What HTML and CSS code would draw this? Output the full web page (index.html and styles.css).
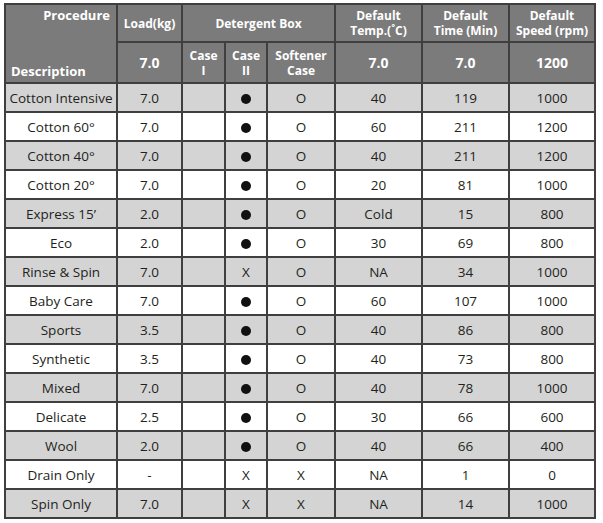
FILE: index.html
```html
<!DOCTYPE html>
<html>
<head>
<meta charset="utf-8">
<link rel="stylesheet" href="styles.css">
</head>
<body>
<table class="prog">
  <colgroup>
    <col class="c-desc"><col class="c-load"><col class="c-case1"><col class="c-case2"><col class="c-soft"><col class="c-temp"><col class="c-time"><col class="c-speed">
  </colgroup>
  <thead>
    <tr class="h1">
      <th rowspan="2" class="corner">
        <div class="corner-in">
          <span class="proc">Procedure</span>
          <span class="desc">Description</span>
        </div>
      </th>
      <th>Load(kg)</th>
      <th colspan="3">Detergent Box</th>
      <th>Default<br>Temp.(˚C)</th>
      <th>Default<br>Time (Min)</th>
      <th>Default<br>Speed (rpm)</th>
    </tr>
    <tr class="h2">
      <th class="big">7.0</th>
      <th>Case<br>I</th>
      <th>Case<br>II</th>
      <th>Softener<br>Case</th>
      <th class="big">7.0</th>
      <th class="big">7.0</th>
      <th class="big">1200</th>
    </tr>
  </thead>
  <tbody>
    <tr class="g"><td>Cotton Intensive</td><td>7.0</td><td></td><td><span class="dot"></span></td><td>O</td><td>40</td><td>119</td><td>1000</td></tr>
    <tr><td>Cotton 60°</td><td>7.0</td><td></td><td><span class="dot"></span></td><td>O</td><td>60</td><td>211</td><td>1200</td></tr>
    <tr class="g"><td>Cotton 40°</td><td>7.0</td><td></td><td><span class="dot"></span></td><td>O</td><td>40</td><td>211</td><td>1200</td></tr>
    <tr><td>Cotton 20°</td><td>7.0</td><td></td><td><span class="dot"></span></td><td>O</td><td>20</td><td>81</td><td>1000</td></tr>
    <tr class="g"><td>Express 15’</td><td>2.0</td><td></td><td><span class="dot"></span></td><td>O</td><td>Cold</td><td>15</td><td>800</td></tr>
    <tr><td>Eco</td><td>2.0</td><td></td><td><span class="dot"></span></td><td>O</td><td>30</td><td>69</td><td>800</td></tr>
    <tr class="g"><td>Rinse &amp; Spin</td><td>7.0</td><td></td><td>X</td><td>O</td><td>NA</td><td>34</td><td>1000</td></tr>
    <tr><td>Baby Care</td><td>7.0</td><td></td><td><span class="dot"></span></td><td>O</td><td>60</td><td>107</td><td>1000</td></tr>
    <tr class="g"><td>Sports</td><td>3.5</td><td></td><td><span class="dot"></span></td><td>O</td><td>40</td><td>86</td><td>800</td></tr>
    <tr><td>Synthetic</td><td>3.5</td><td></td><td><span class="dot"></span></td><td>O</td><td>40</td><td>73</td><td>800</td></tr>
    <tr class="g"><td>Mixed</td><td>7.0</td><td></td><td><span class="dot"></span></td><td>O</td><td>40</td><td>78</td><td>1000</td></tr>
    <tr><td>Delicate</td><td>2.5</td><td></td><td><span class="dot"></span></td><td>O</td><td>30</td><td>66</td><td>600</td></tr>
    <tr class="g"><td>Wool</td><td>2.0</td><td></td><td><span class="dot"></span></td><td>O</td><td>40</td><td>66</td><td>400</td></tr>
    <tr><td>Drain Only</td><td>-</td><td></td><td>X</td><td>X</td><td>NA</td><td>1</td><td>0</td></tr>
    <tr class="g"><td>Spin Only</td><td>7.0</td><td></td><td>X</td><td>X</td><td>NA</td><td>14</td><td>1000</td></tr>
  </tbody>
</table>
</body>
</html>
```
FILE: styles.css
```css
html, body {
  margin: 0;
  padding: 0;
  background: #ffffff;
}
body {
  padding: 3px 0 0 4px;
  font-family: "Open Sans", "Noto Sans", sans-serif;
  color: #231f20;
}
.prog {
  border-collapse: collapse;
  table-layout: fixed;
  width: 591px;
}
.c-desc { width: 112px; }
.c-load { width: 65px; }
.c-case1 { width: 43px; }
.c-case2 { width: 42px; }
.c-soft { width: 68px; }
.c-temp { width: 87px; }
.c-time { width: 87px; }
.c-speed { width: 86px; }

.prog th, .prog td {
  border: 2px solid #3f3f3f;
  padding: 0;
  text-align: center;
  vertical-align: middle;
}
.prog th {
  background: #7b7b7b;
  color: #ffffff;
  font-weight: 700;
  font-size: 12px;
  line-height: 15px;
}
.h1 th { height: 36px; }
.h2 th { height: 39px; }
.prog th.big { font-size: 14px; }

.corner {
  background: linear-gradient(to top right, transparent calc(50% - 1px), #222 50%, transparent calc(50% + 1px)), #7b7b7b;
}
.corner-in {
  display: flex;
  flex-direction: column;
  justify-content: space-between;
  height: 75px;
  padding: 2px 6px 2px 5px;
  box-sizing: border-box;
}
.proc {
  align-self: flex-end;
  font-size: 13px;
}
.desc {
  align-self: flex-start;
  font-size: 13px;
}

.prog td {
  height: 27px;
  font-size: 13.5px;
  line-height: 16px;
}
.prog tr.g td { background: #d4d4d4; }
.dot {
  display: inline-block;
  width: 10px;
  height: 10px;
  border-radius: 50%;
  background: #111111;
  vertical-align: -1px;
}
```
